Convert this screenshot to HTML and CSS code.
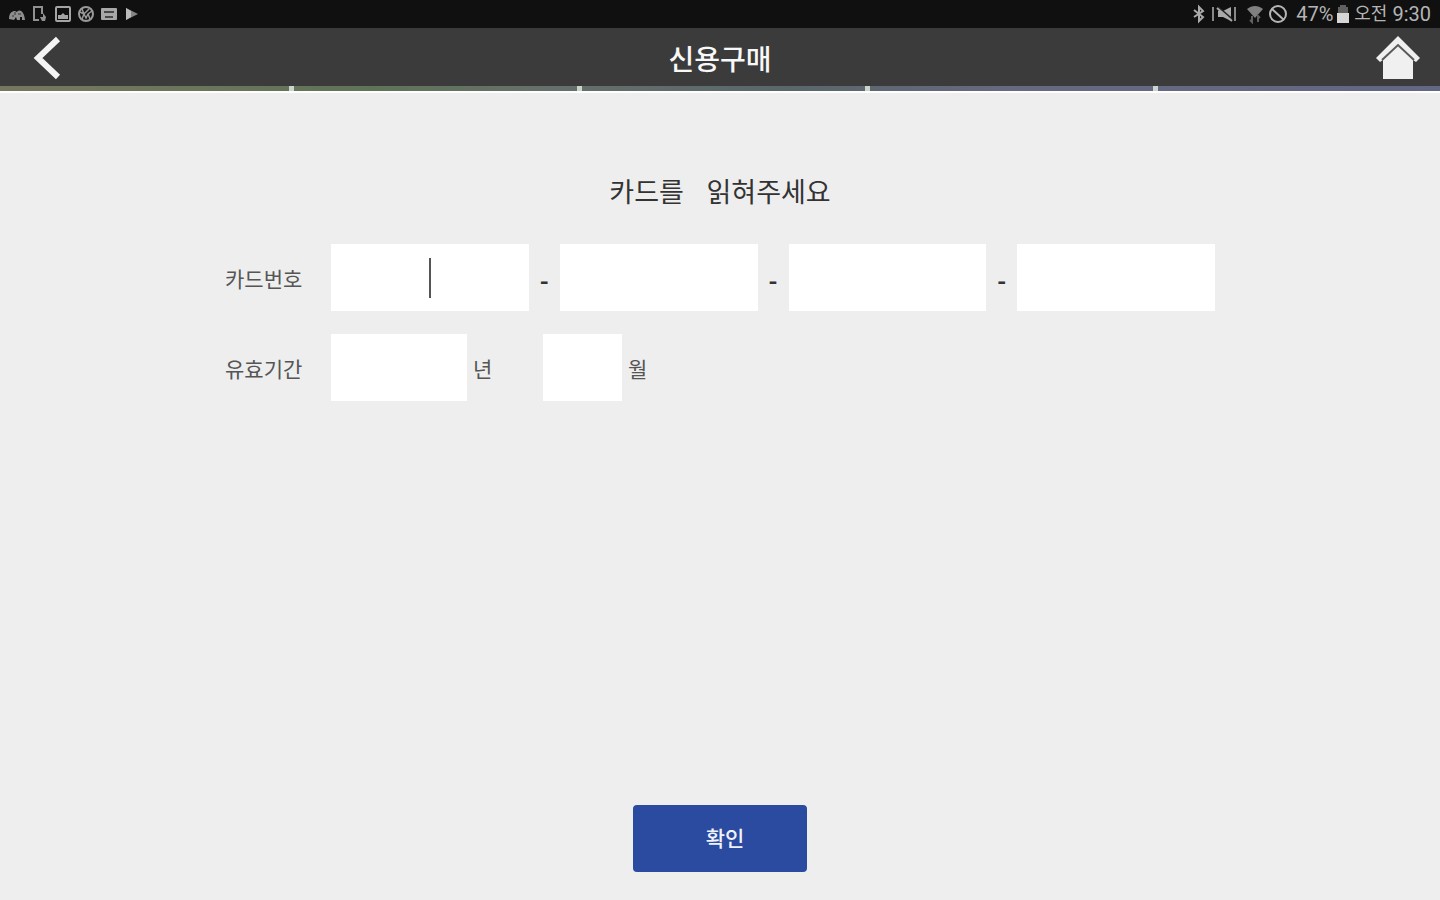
FILE: index.html
```html
<!DOCTYPE html>
<html lang="ko">
<head>
<meta charset="utf-8">
<meta name="viewport" content="width=device-width, initial-scale=1">
<title>신용구매</title>
<link rel="stylesheet" href="styles.css">
</head>
<body>
<div class="status">
  <div class="status-left">
    <svg width="18" height="18" viewBox="0 0 18 18" fill="#8e8e8e"><path d="M1 14c0-6 3-8 6-8l2 1c2-3 7-2 8 8h-3v-3h-2v3H9l-1-3-2 3z"/><path d="M4 11h2M10 9h3M7 7v3" stroke="#333" stroke-width="1"/></svg>
    <svg width="18" height="18" viewBox="0 0 18 18" fill="none" stroke="#909090" stroke-width="2"><path d="M8 15H3V2h8v7"/><path d="M9 12h3V8l3 4-1 4h-3z" fill="#909090" stroke="none"/></svg>
    <svg width="18" height="18" viewBox="0 0 18 18"><rect x="2" y="2" width="14" height="14" rx="1" fill="none" stroke="#a5a5a5" stroke-width="2"/><path d="M4 14v-4h3l2-2 2 2h3v4z" fill="#a5a5a5"/></svg>
    <svg width="18" height="18" viewBox="0 0 18 18" fill="none" stroke="#999"><circle cx="9" cy="9" r="7"  stroke-width="2"/><path d="M3 7l4 2 2 4 2-4 4-3M5 4l2 5 5-5M5 14l2-5M13 14l-2-5" stroke-width="1.500"/></svg>
    <svg width="18" height="18" viewBox="0 0 18 18"><rect x="1" y="3" width="16" height="12" rx="1" fill="#a8a8a8"/><path d="M4 7h10M5 12h8" stroke="#484848" stroke-width="2"/></svg>
    <svg width="18" height="18" viewBox="0 0 18 18"><path d="M3 3l12 6-12 6z" fill="#858585"/><path d="M3 3l5 3v6l-5 3z" fill="#bbb"/></svg>
  </div>
  <div class="status-right">
    <svg width="14" height="20" viewBox="0 0 14 20" fill="none" stroke="#aaa" stroke-width="2"><path d="M1 6l9 7-4 4V3l4 4-9 6"/></svg>
    <svg width="26" height="20" viewBox="0 0 26 20" fill="#aaa"><path d="M1 3v14M23 3v14" stroke="#888" stroke-width="2"/><path d="M6 7h5l8-4v14l-8-4H6z"/><path d="M6 3l14 12" stroke="#222" stroke-width="2"/><path d="M5 4l15 13" stroke="#aaa" stroke-width="2"/></svg>
    <svg class="wifi" width="18" height="20" viewBox="0 0 18 20" fill="none"><path d="M1 5c5-4 11-4 16 0l-8 9z" fill="#808080"/><path d="M6 12v6l-2-2M12 18v-6l2 2" stroke="#606060" stroke-width="2"/></svg>
    <svg class="blocked" width="20" height="20" viewBox="0 0 20 20" fill="none" stroke="#b5b5b5" stroke-width="2"><circle cx="10" cy="10" r="8"/><path d="M4 5l12 11"/></svg>
    <span>47%</span>
    <svg class="battery" width="14" height="20" viewBox="0 0 14 20"><path d="M4 1h6v2h2v7H2V3h2z" fill="#606060"/><path d="M1 9h12v10H1z" fill="#d6d6d6"/></svg>
    <span class="meridiem">오전</span>
    <span>9:30</span>
  </div>
</div>
<header class="header">
  <button class="icon-button" type="button" aria-label="뒤로">
    <svg width="30" height="46" viewBox="0 0 30 46" fill="none" stroke="#f4f4f4" stroke-width="6"><path d="M26 4L6 23l20 19"/></svg>
  </button>
  <h1 class="title">신용구매</h1>
  <button class="icon-button" type="button" aria-label="홈">
    <svg width="44" height="46" viewBox="0 0 44 46"><path d="M22 1L0 23l4 4 3-2v19h30V25l3 2 4-4z" fill="#f0f0f0"/><path d="M6 25L22 10l16 15" fill="none" stroke="#5a5a5a" stroke-width="2"/></svg>
  </button>
</header>
<div class="strip"><i></i><i></i><i></i><i></i><i></i></div>
<main class="main">
  <h2 class="prompt">카드를   읽혀주세요</h2>
  <form class="form">
    <div class="row">
      <label class="label" for="card1">카드번호</label>
      <div class="fields">
        <span class="card-field"><input class="box" id="card1" type="text" inputmode="numeric" maxlength="4"><span class="caret"></span></span>
        <span class="dash">-</span>
        <span class="card-field"><input class="box" type="text" inputmode="numeric" maxlength="4" aria-label="카드번호 2"></span>
        <span class="dash">-</span>
        <span class="card-field"><input class="box" type="text" inputmode="numeric" maxlength="4" aria-label="카드번호 3"></span>
        <span class="dash">-</span>
        <span class="card-field"><input class="box" type="text" inputmode="numeric" maxlength="4" aria-label="카드번호 4"></span>
      </div>
    </div>
    <div class="row">
      <span class="label">유효기간</span>
      <div class="fields">
        <input class="box year" id="year" type="text" inputmode="numeric"><label class="unit" for="year">년</label>
        <input class="box month" id="month" type="text" inputmode="numeric"><label class="unit" for="month">월</label>
      </div>
    </div>
  </form>
  <button class="confirm" type="button">확인</button>
</main>
</body>
</html>
```
FILE: styles.css
```css
* {
  box-sizing: border-box;
}

body {
  margin: 0;
  min-height: 100vh;
  display: flex;
  flex-direction: column;
  background: #eee;
  color: #333;
  font-family: "Noto Sans CJK KR", sans-serif;
}

svg {
  display: block;
}

button {
  font-family: inherit;
  border: 0;
  cursor: pointer;
}

.status {
  display: flex;
  justify-content: space-between;
  align-items: center;
  height: 28px;
  padding: 0 9px 0 8px;
  background: #101010;
  color: #b5b5b5;
  font-family: Roboto, "Noto Sans CJK KR", sans-serif;
  font-size: 20px;
  line-height: 28px;
}

.status-left {
  display: flex;
  gap: 5px;
}

.status-right {
  display: flex;
  align-items: center;
}

.status-right svg:first-child {
  margin-right: 5px;
}

.wifi {
  margin-left: 8px;
}

.blocked {
  margin: 0 8px 0 4px;
}

.battery {
  margin: 0 4px 0 3px;
}

.meridiem {
  margin-right: 5px;
  font-size: 18px;
}

.header {
  display: flex;
  justify-content: space-between;
  align-items: center;
  height: 58px;
  padding: 2px 20px 0 32px;
  background: #3b3b3b;
}

.icon-button {
  width: 44px;
  padding: 0;
  background: none;
}

.title {
  margin: 0;
  padding-right: 12px;
  color: #f8f8f8;
  font-size: 28px;
  font-weight: 500;
  line-height: 56px;
}

.strip {
  display: grid;
  grid-template-columns: repeat(5, 1fr);
  height: 7px;
  border-bottom: 2px solid #fff;
  background: linear-gradient(90deg, #77775f, #5f7457 26%, #66706b 38%, #59676a 55%, #666980 70%, #626782);
}

.strip i {
  border-right: 5px solid #c8d6cc;
  margin-right: -6px;
}

.strip i:last-child {
  border: 0;
  margin: 0;
}

.main {
  flex: 1;
  display: flex;
  flex-direction: column;
  align-items: center;
  padding: 78px 0 28px;
}

.prompt {
  margin: 0 0 33px;
  font-size: 27px;
  font-weight: 400;
  line-height: 40px;
  white-space: pre;
}

.form {
  display: grid;
  gap: 23px;
  width: 90%;
  max-width: 990px;
  color: #555;
  font-size: 21px;
}

.row {
  display: grid;
  grid-template-columns: 106px 1fr;
  align-items: center;
}

.fields {
  display: flex;
  align-items: center;
}

.card-field {
  position: relative;
  flex: 1;
}

.box {
  display: block;
  width: 100%;
  height: 67px;
  padding: 0 8px;
  border: 0;
  background: #fff;
  font: inherit;
  text-align: center;
}

.year {
  width: 136px;
}

.month {
  width: 79px;
}

.unit {
  width: 76px;
  padding-left: 6px;
}

.dash {
  width: 31px;
  padding-top: 8px;
  color: #333;
  font-size: 24px;
  font-weight: 700;
  text-align: center;
}

.caret {
  position: absolute;
  top: 14px;
  left: 50%;
  width: 2px;
  height: 40px;
  margin-left: -1px;
  background: #555;
}

.confirm {
  width: 174px;
  height: 67px;
  margin-top: auto;
  padding: 0 0 4px 10px;
  border-radius: 4px;
  background: #2a4b9f;
  color: #f0f2fa;
  font-size: 21px;
  font-weight: 500;
}
```
